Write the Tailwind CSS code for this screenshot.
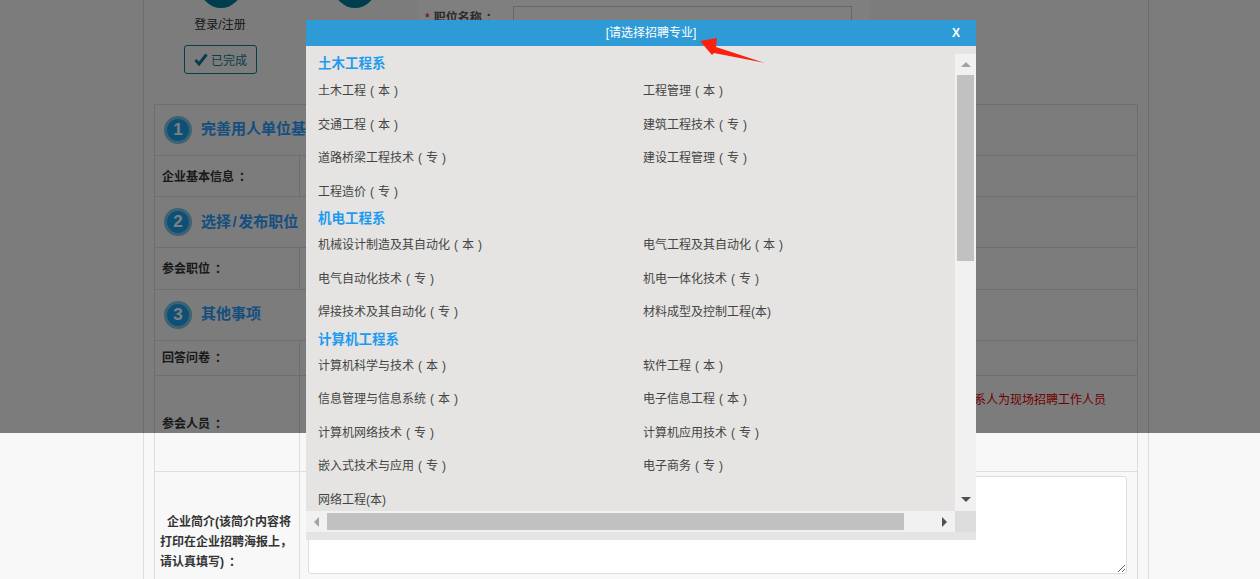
<!DOCTYPE html>
<html lang="zh-CN"><head><meta charset="utf-8"><script src="https://cdn.jsdelivr.net/npm/@tailwindcss/browser@4"></script><title>招聘</title></head>
<body class="m-0 bg-[#f8f8f8]">
<div class="relative h-[579px] w-[1260px] overflow-hidden bg-[#f8f8f8] font-['Liberation_Sans','Noto_Sans_CJK_SC',sans-serif] text-xs text-[#333]">
  <!-- page -->
  <div class="ml-[143px] h-[579px] w-[1006px] border-x border-[#ddd] px-[10px]">
    <div class="flex h-[104px]">
      <div class="flex w-[264px] flex-col">
        <div class="flex">
          <div class="ml-[46px] -mt-[34px] h-[42px] w-[42px] rounded-full bg-[#007a9e]"></div>
          <div class="ml-[92px] -mt-[34px] h-[42px] w-[42px] rounded-full bg-[#007a9e]"></div>
        </div>
        <div class="mt-[11px] ml-[40px] w-[52px] text-center text-xs leading-[12px] text-[#333]">登录/注册</div>
        <div class="mt-[14px] ml-[30px] flex h-[29px] w-[73px] items-center justify-center gap-[3px] rounded-[3px] border border-[#0e7c9c] pt-[3px] text-xs text-[#0e7c9c]">
          <svg class="-mt-[3px]" width="14" height="14" viewBox="0 0 14 14"><path d="M1.5 7 L5 11 L12.5 1.5" fill="none" stroke="#0e7c9c" stroke-width="3"/></svg>已完成
        </div>
      </div>
      <div class="flex h-[104px] w-[452px] items-start bg-white pt-[6px] pl-[7px]">
        <span class="mt-[4px] text-[#e00000]">*</span><span class="mt-[4px] ml-[4px] font-bold text-[#555]">职位名称<span class="ml-[4px]">：</span></span><div class="ml-[15px] h-[30px] w-[339px] border border-[#ccc] bg-white"></div>
      </div>
    </div>
    <div class="w-[984px] border border-[#ddd]">
      <div class="flex h-[51px] items-center border-b border-[#ddd] pl-[9px]">
        <span class="flex h-[28px] w-[28px] items-center justify-center rounded-full border-[3px] border-[#7cc4e4] bg-[#18a0f0] text-[17px] font-bold text-white">1</span>
        <span class="ml-[9px] -mt-[2px] w-[105px] overflow-hidden text-[15px] font-bold whitespace-nowrap text-[#2a9cff]">完善用人单位基本信息</span>
      </div>
      <div class="flex h-[41px] border-b border-[#ddd]"><div class="flex w-[145px] items-center border-r border-[#ddd] pt-[2px] pl-[7px] font-bold">企业基本信息<span class="ml-[5px]">：</span></div></div>
      <div class="flex h-[51px] items-center border-b border-[#ddd] pl-[9px]">
        <span class="flex h-[28px] w-[28px] items-center justify-center rounded-full border-[3px] border-[#7cc4e4] bg-[#18a0f0] text-[17px] font-bold text-white">2</span>
        <span class="ml-[9px] text-[15px] font-bold text-[#2a9cff]">选择<span class="mx-[1.5px]">/</span>发布职位</span>
      </div>
      <div class="flex h-[42px] border-b border-[#ddd]"><div class="flex w-[145px] items-center border-r border-[#ddd] pl-[7px] font-bold">参会职位<span class="ml-[5px]">：</span></div></div>
      <div class="flex h-[51px] items-center border-b border-[#ddd] pl-[9px]">
        <span class="flex h-[28px] w-[28px] items-center justify-center rounded-full border-[3px] border-[#7cc4e4] bg-[#18a0f0] text-[17px] font-bold text-white">3</span>
        <span class="ml-[9px] -mt-[2px] text-[15px] font-bold text-[#2a9cff]">其他事项</span>
      </div>
      <div class="flex h-[35px] border-b border-[#ddd]"><div class="flex w-[145px] items-center border-r border-[#ddd] pl-[7px] font-bold">回答问卷<span class="ml-[5px]">：</span></div></div>
      <div class="flex h-[96px] border-b border-[#ddd]">
        <div class="flex w-[145px] items-center border-r border-[#ddd] pl-[7px] font-bold">参会人员<span class="ml-[5px]">：</span></div>
        <div class="flex-1 pt-[16px] pr-[31px] text-right text-[#e00000]">系人为现场招聘工作人员</div>
      </div>
      <div class="flex h-[110px]">
        <div class="w-[145px] border-r border-[#ddd] pt-[40px] pl-[5px] text-xs leading-[20px] font-bold"><span class="pl-[7px]">企业简介(该简介内容将</span><br>打印在企业招聘海报上，<br>请认真填写)<span class="ml-[5px]">：</span></div>
        <div class="pt-[4px] pl-[8px]"><textarea class="block h-[98px] w-[819px] rounded-[3px] border border-[#ddd] bg-white"></textarea></div>
      </div>
    </div>
  </div>
  <!-- overlay -->
  <div class="absolute top-0 left-0 h-[433px] w-full bg-black/50"></div>
  <!-- dialog -->
  <div class="absolute top-[20px] left-[306px] h-[520px] w-[670px] bg-[#e5e4e2]">
    <div class="relative flex h-[26px] items-center justify-center bg-[#2f9bd6] pl-[20px] text-xs text-white">[请选择招聘专业]<span class="absolute top-[5px] right-[16px] text-xs leading-[16px] font-bold">X</span></div>
    <div class="mt-[8px] flex h-[478px] flex-col">
      <div class="flex h-[457px]">
        <div class="h-[457px] w-[649px] overflow-hidden pl-[12px] text-[#444]">
          <div class="h-[19px] text-[13.5px] leading-[19px] font-bold text-[#1e9bf0]">土木工程系</div>
          <div class="grid grid-cols-[325px_300px] auto-rows-[33.5px] leading-[17px]">
            <div class="pt-[10px]">土木工程<span class="mx-[4px]">(</span>本<span class="mx-[4px]">)</span></div><div class="pt-[10px]">工程管理<span class="mx-[4px]">(</span>本<span class="mx-[4px]">)</span></div>
            <div class="pt-[10px]">交通工程<span class="mx-[4px]">(</span>本<span class="mx-[4px]">)</span></div><div class="pt-[10px]">建筑工程技术<span class="mx-[4px]">(</span>专<span class="mx-[4px]">)</span></div>
            <div class="pt-[10px]">道路桥梁工程技术<span class="mx-[4px]">(</span>专<span class="mx-[4px]">)</span></div><div class="pt-[10px]">建设工程管理<span class="mx-[4px]">(</span>专<span class="mx-[4px]">)</span></div>
            <div class="pt-[10px]">工程造价<span class="mx-[4px]">(</span>专<span class="mx-[4px]">)</span></div><div></div>
          </div>
          <div class="mt-[1.5px] h-[19px] text-[13.5px] leading-[19px] font-bold text-[#1e9bf0]">机电工程系</div>
          <div class="grid grid-cols-[325px_300px] auto-rows-[33.5px] leading-[17px]">
            <div class="pt-[9.5px]">机械设计制造及其自动化<span class="mx-[4px]">(</span>本<span class="mx-[4px]">)</span></div><div class="pt-[9.5px]">电气工程及其自动化<span class="mx-[4px]">(</span>本<span class="mx-[4px]">)</span></div>
            <div class="pt-[9.5px]">电气自动化技术<span class="mx-[4px]">(</span>专<span class="mx-[4px]">)</span></div><div class="pt-[9.5px]">机电一体化技术<span class="mx-[4px]">(</span>专<span class="mx-[4px]">)</span></div>
            <div class="pt-[9.5px]">焊接技术及其自动化<span class="mx-[4px]">(</span>专<span class="mx-[4px]">)</span></div><div class="pt-[9.5px]">材料成型及控制工程(本)</div>
          </div>
          <div class="mt-[2px] h-[19px] text-[13.5px] leading-[19px] font-bold text-[#1e9bf0]">计算机工程系</div>
          <div class="grid grid-cols-[325px_300px] auto-rows-[33.5px] leading-[17px]">
            <div class="pt-[8.5px]">计算机科学与技术<span class="mx-[4px]">(</span>本<span class="mx-[4px]">)</span></div><div class="pt-[8.5px]">软件工程<span class="mx-[4px]">(</span>本<span class="mx-[4px]">)</span></div>
            <div class="pt-[8.5px]">信息管理与信息系统<span class="mx-[4px]">(</span>本<span class="mx-[4px]">)</span></div><div class="pt-[8.5px]">电子信息工程<span class="mx-[4px]">(</span>本<span class="mx-[4px]">)</span></div>
            <div class="pt-[8.5px]">计算机网络技术<span class="mx-[4px]">(</span>专<span class="mx-[4px]">)</span></div><div class="pt-[8.5px]">计算机应用技术<span class="mx-[4px]">(</span>专<span class="mx-[4px]">)</span></div>
            <div class="pt-[8.5px]">嵌入式技术与应用<span class="mx-[4px]">(</span>专<span class="mx-[4px]">)</span></div><div class="pt-[8.5px]">电子商务<span class="mx-[4px]">(</span>专<span class="mx-[4px]">)</span></div>
            <div class="pt-[8.5px]">网络工程(本)</div><div></div>
          </div>
        </div>
        <div class="flex h-[457px] w-[21px] flex-col items-center bg-[#f1f1f1] px-[2px]">
          <div class="flex h-[21px] w-full items-center justify-center"><div class="h-0 w-0 border-x-[5px] border-b-[5px] border-x-transparent border-b-[#a3a3a3]"></div></div>
          <div class="h-[186px] w-[17px] bg-[#c1c1c1]"></div>
          <div class="flex-1"></div>
          <div class="flex h-[23px] w-full items-center justify-center"><div class="h-0 w-0 border-x-[5px] border-t-[5px] border-x-transparent border-t-[#505050]"></div></div>
        </div>
      </div>
      <div class="flex h-[21px]">
        <div class="flex h-[21px] w-[649px] items-center bg-[#f1f1f1] py-[2px]">
          <div class="flex w-[21px] justify-center"><div class="h-0 w-0 border-y-[5px] border-r-[5px] border-y-transparent border-r-[#a3a3a3]"></div></div>
          <div class="h-[17px] w-[577px] bg-[#c1c1c1]"></div>
          <div class="flex-1"></div>
          <div class="flex w-[21px] justify-center"><div class="h-0 w-0 border-y-[5px] border-l-[5px] border-y-transparent border-l-[#505050]"></div></div>
        </div>
        <div class="h-[21px] w-[21px] bg-[#dcdcdc]"></div>
      </div>
    </div>
  </div>
  <!-- annotation arrow -->
  <svg class="absolute top-[36px] left-[698px]" width="70" height="30" viewBox="0 0 70 30"><path d="M2 5 L19 2 L18 11 L67 27 L16 17 L14 19 Z" fill="#fb2010"/></svg>
</div>
</body></html>
